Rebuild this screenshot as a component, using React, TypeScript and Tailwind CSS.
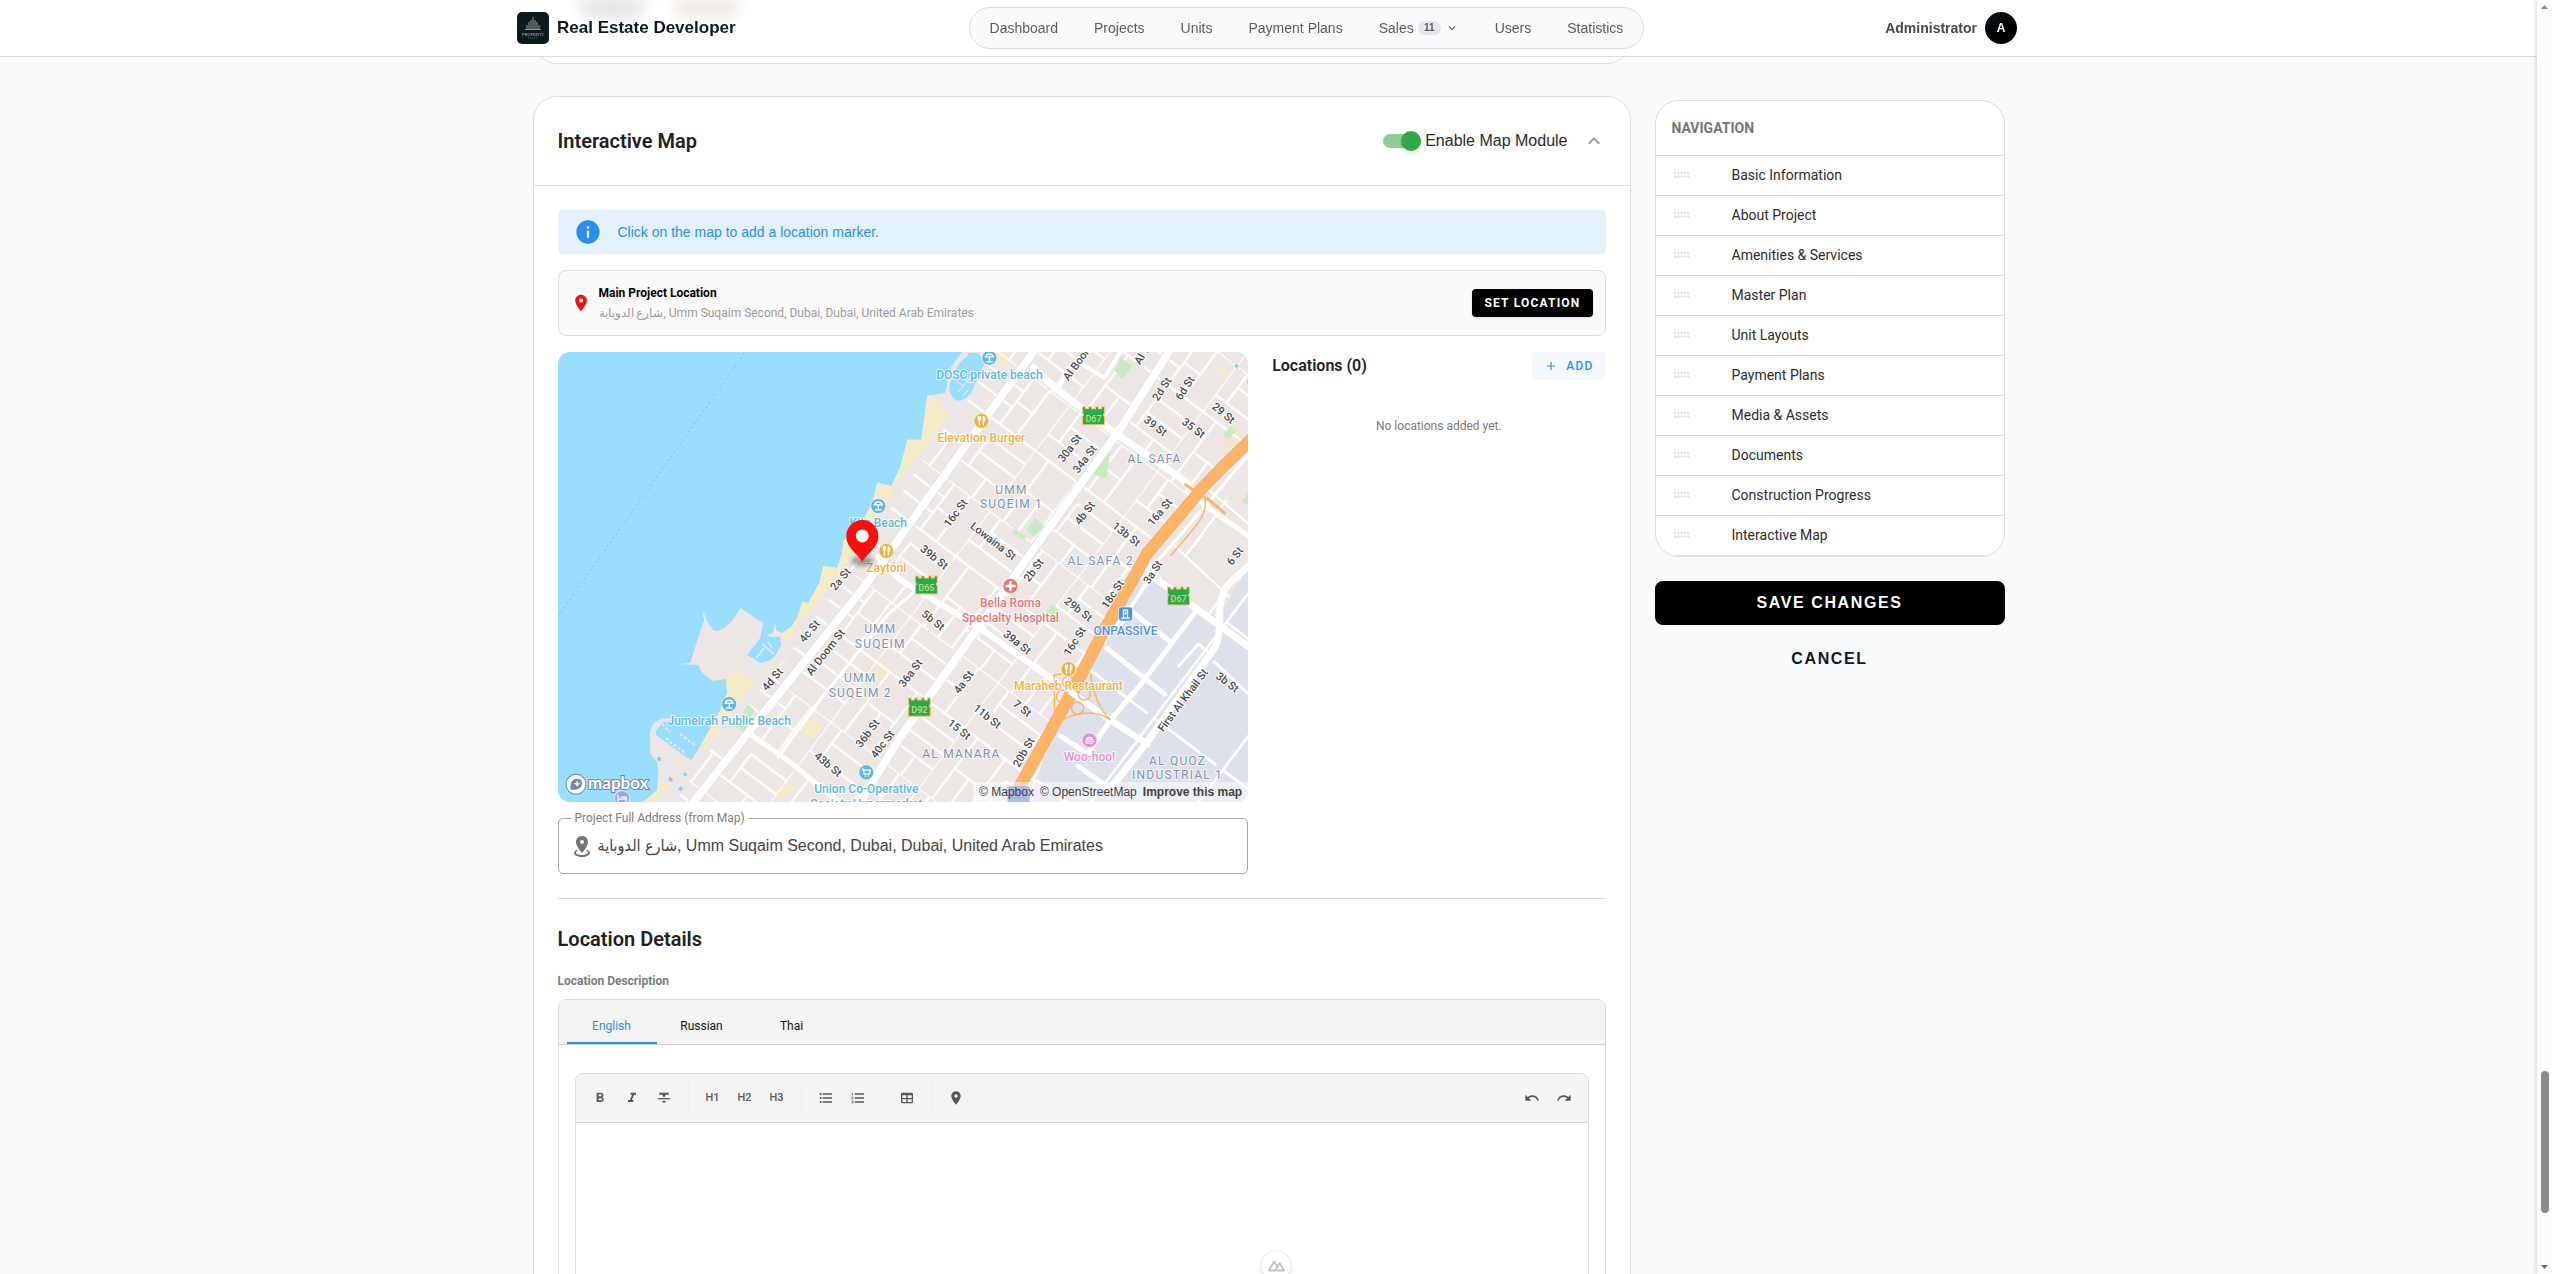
import React, { FunctionComponent, useState } from "react";
import {
  MdAdd,
  MdExpandLess,
  MdExpandMore,
  MdFormatBold,
  MdFormatItalic,
  MdFormatListBulleted,
  MdFormatListNumbered,
  MdFormatStrikethrough,
  MdInfo,
  MdLocationOn,
  MdRedo,
  MdUndo,
} from "react-icons/md";

const ADDRESS = "شارع الدوباية, Umm Suqaim Second, Dubai, Dubai, United Arab Emirates";

const sections = [
  "Basic Information",
  "About Project",
  "Amenities & Services",
  "Master Plan",
  "Unit Layouts",
  "Payment Plans",
  "Media & Assets",
  "Documents",
  "Construction Progress",
  "Interactive Map",
];

const Logo = () => (
  <svg viewBox="0 0 32 32" className="size-8 shrink-0" aria-hidden="true">
    <rect width="32" height="32" rx="5" fill="#0c1a1f" />
    <g stroke="#9a948f" strokeWidth="1">
      <path d="M16 5v12M14 8v9M18 8v9M12 10v7M20 10v7M10 13v4M22 13v4" />
      <path d="M8 17.500h16" />
    </g>
    <text x="16" y="23.500" fontSize="4" fontWeight="700" textAnchor="middle" fill="#8d8f90">
      PROPERTY
    </text>
    <path d="M11 26h10" stroke="#55605f" strokeWidth="1" strokeDasharray="1 1" />
  </svg>
);

const Header = () => (
  <header className="fixed inset-x-0 top-0 z-20 border-b border-[#dcdcdc] bg-white pr-[18px] font-['Liberation_Sans',Arial,sans-serif]">
    <div className="pointer-events-none absolute left-[580px] top-0 h-4 w-16 rounded-b-xl bg-[#dcdcde] blur-[8px]" />
    <div className="pointer-events-none absolute left-[675px] top-0 h-4 w-16 rounded-b-xl bg-[#ebe5e1] blur-[8px]" />
    <div className="relative mx-auto flex h-14 max-w-[1500px] items-center justify-between">
      <a href="#home" className="flex items-center gap-2 text-[17px] font-bold text-[#0c1a1f]">
        <Logo />
        Real Estate Developer
      </a>
      <nav className="flex h-[42px] items-center gap-1 rounded-full border border-[#dadbdc] bg-[#f9fafc] px-1 text-sm text-[#5c5c5e]">
        <a href="#dashboard" className="px-4">Dashboard</a>
        <a href="#projects" className="px-4">Projects</a>
        <a href="#units" className="px-4">Units</a>
        <a href="#plans" className="px-4">Payment Plans</a>
        <button type="button" className="flex items-center gap-1 px-4">
          Sales
          <span className="flex h-[14px] w-[23px] items-center justify-center rounded-full bg-[#e6e6ec] text-[10px] font-bold">
            11
          </span>
          <MdExpandMore className="size-[14px]" />
        </button>
        <a href="#users" className="px-4">Users</a>
        <a href="#statistics" className="px-4">Statistics</a>
      </nav>
      <button type="button" className="flex items-center gap-2 pl-2 text-sm font-bold text-[#48484a]">
        Administrator
        <span className="flex size-8 items-center justify-center rounded-full bg-linear-to-br from-[#0c1a1f] to-black text-xs text-white">
          A
        </span>
      </button>
    </div>
  </header>
);

/* ---------- map ---------- */

type Label = [text: string, x: number, y: number, angle: number];

const streets: Label[] = [
  ["Al Boom St", 523, 5, -53],
  ["Al Wasl", 588, -4, -57],
  ["2d St", 603, 37, -57],
  ["6d St", 626, 36, -57],
  ["39 St", 597, 74, 37],
  ["29 St", 665, 61, 40],
  ["35 St", 635, 76, 37],
  ["30a St", 511, 96, -53],
  ["34a St", 526, 107, -53],
  ["16c St", 397, 161, -53],
  ["Lowaina St", 435, 189, 38],
  ["4b St", 526, 161, -53],
  ["13b St", 568, 182, 38],
  ["16a St", 601, 160, -50],
  ["39b St", 376, 205, 38],
  ["6 St", 676, 204, -53],
  ["2b St", 475, 218, -53],
  ["3a St", 594, 220, -57],
  ["5b St", 375, 268, 38],
  ["39a St", 459, 290, 38],
  ["29b St", 520, 257, 38],
  ["18c St", 554, 242, -57],
  ["16c St", 516, 289, -58],
  ["36a St", 352, 321, -53],
  ["4a St", 405, 330, -53],
  ["7 St", 464, 356, 38],
  ["11b St", 429, 364, 38],
  ["15 St", 401, 377, 38],
  ["20b St", 465, 400, -60],
  ["3b St", 669, 330, 38],
  ["2a St", 282, 227, -50],
  ["4c St", 251, 279, -50],
  ["Al Doom St", 267, 300, -52],
  ["4d St", 214, 327, -50],
  ["36b St", 309, 381, -53],
  ["40c St", 324, 392, -53],
  ["43b St", 270, 412, 40],
  ["First Al Khail St", 624, 348, -53],
];

const districts: Label[] = [
  ["AL SAFA", 596, 107, 0],
  ["UMM", 453, 138, 0],
  ["SUQEIM 1", 453, 152, 0],
  ["AL SAFA 2", 542, 209, 0],
  ["UMM", 322, 277, 0],
  ["SUQEIM", 322, 292, 0],
  ["UMM", 302, 326, 0],
  ["SUQEIM 2", 302, 341, 0],
  ["AL MANARA", 403, 402, 0],
  ["AL QUOZ", 619, 409, 0],
  ["INDUSTRIAL 1", 619, 423, 0],
];

const shields: [string, number, number][] = [
  ["D67", 535, 64],
  ["D65", 368, 233],
  ["D67", 620, 244],
  ["D92", 361, 355],
];

interface PoiProps {
  x: number;
  y: number;
  color: string;
  kind: "beach" | "food" | "shop" | "burger" | "health" | "office" | "hotel";
  lines: string[];
}

const poiGlyphs: Record<PoiProps["kind"], React.ReactNode> = {
  beach: <path d="M-4-1Q-3-4 0-4Q3-4 4-1ZM0-1V4M-3 4H3" />,
  food: <path d="M-3-4V-1H-1V-4M-2-4V4M2 4V-4Q4-3 3 0H2" />,
  shop: <path d="M-4-3H-3L-2 2H3L4-2H-3M-1 4H-1M2 4H2" />,
  burger: <path d="M-3-1Q0-5 3-1ZM-4 1H4M-3 3H3" />,
  health: <path d="M0-4V4M-4 0H4" strokeWidth="2.500" />,
  office: <path d="M-2 4V-4H2V4ZM-4 4H4M0-2V0" />,
  hotel: <path d="M-4-3V3M-4 1H4V3M-1-1H4V1" />,
};

const Poi = ({ x, y, color, kind, lines }: PoiProps) => (
  <g transform={`translate(${x} ${y})`}>
    {kind === "office" ? (
      <rect x="-7" y="-7" width="14" height="14" rx="3" fill={color} stroke="#fff" strokeOpacity=".6" />
    ) : (
      <circle r="7.500" fill={color} stroke="#fff" strokeOpacity=".6" />
    )}
    <g fill="none" stroke="#fff" strokeWidth="1.300" strokeLinecap="round">
      {poiGlyphs[kind]}
    </g>
    {lines.map((line, i) => (
      <text
        key={line}
        y={21 + i * 15}
        textAnchor="middle"
        fontSize="12"
        fontWeight="500"
        fill={color}
        stroke="#fff"
        strokeOpacity=".75"
        strokeWidth="2"
        paintOrder="stroke"
      >
        {line}
      </text>
    ))}
  </g>
);

const LAND =
  "M404 0L392 16L387 41L369 44L366 66L363 88L349 88L342 115L333 134L319 131L314 151L305 168L290 182L285 190L284 200L279 216L265 214L261 231L250 251L244 250L239 266L233 275L224 281L218 279L217 270L215 281L208 283L213 285L222 285L223 293L217 304L210 309L202 311L189 303L202 286L205 271L182 256L174 269L166 276L160 279L155 278L150 271L144 257L146 268L141 283L132 311L121 312L140 313L144 321L155 329L168 327L169 341L162 358L141 396L133 408L98 383L98 378L105 370L119 366L104 366L95 372L92 379L92 401L99 410L100 420L99 438L85 450H690V0Z";

const HIGHWAY = "M694 86L664 115L642 138L618 167L589 201L575 226L542 285L525 318L502 361L458 440";

const ProjectMap = () => (
  <svg
    viewBox="0 0 690 450"
    preserveAspectRatio="xMidYMid slice"
    className="block h-[450px] w-full font-[Roboto,sans-serif]"
    role="img"
    aria-label="Project map"
  >
    <defs>
      <pattern id="blocks" width="132" height="110" patternUnits="userSpaceOnUse" patternTransform="rotate(-53)">
        <path
          d="M0 0H132M0 0V110M0 52H76M76 0V110M0 17H76M0 35H38M38 17V52M97 0V66M116 14V66M76 66H132M97 14H132M24 52V110M42 66V110M59 66V110M24 66H59M0 88H24M76 86H132M104 66V86"
          fill="none"
          stroke="#fff"
          strokeWidth="2"
        />
      </pattern>
      <pattern id="lots" width="120" height="86" patternUnits="userSpaceOnUse" patternTransform="rotate(-53)">
        <path d="M0 8H120M66 8V86" fill="none" stroke="#fff" strokeWidth="2.500" />
      </pattern>
      <clipPath id="land">
        <path d={LAND} />
      </clipPath>
    </defs>
    <rect width="690" height="450" fill="#99ddff" />
    <path d="M186 2L0 264" stroke="#6fb4d8" strokeWidth="1" strokeDasharray="1 4" />
    <path d={LAND} fill="#ece7e5" />

    <g clipPath="url(#land)">
      <path
        d="M369 40L391 62L377 82L365 98L350 114L340 128L328 152L312 178L296 200L282 220L256 252L240 272L229 290L216 278L262 205L290 150L320 120L348 80Z"
        fill="#f5ebc7"
      />
      <path d="M180 318L196 330L176 358L146 398L136 396L162 350L167 326Z" fill="#f5ebc7" />
      <path d="M99 430L114 431L94 452H82ZM247 370L257 366L266 376L256 386L246 382ZM214 438L235 431L236 438L222 448Z" fill="#f5ebc7" />
      <path d="M436 0H450L448 12L440 18Z" fill="#f5ebc7" />
      <path d="M312 300L336 317L324 334L305 324Z" fill="#f0e6d3" />
      <path d="M668 73L680 71L686 80L672 100L662 92Z" fill="#f0e6d3" />
      <path d="M658 13L673 20L669 25L658 20Z" fill="#f5ebc7" />

      {/* street blocks, none on the peninsula and the beaches */}
      <path
        d="M408 0L396 60L352 128L300 205L236 295L180 365L140 412L118 450H690V0Z"
        fill="url(#blocks)"
      />
      <path d="M590 225L640 262L662 262L690 214V450H470L502 361L542 285L575 230Z" fill="#dfe1ea" />
      <path d="M590 225L640 262L662 262L690 214V450H470L502 361L542 285L575 230Z" fill="url(#lots)" />
      <path d="M646 128L690 90V214L664 240L640 258L600 222L590 205Z" fill="#ece7e5" />
      <path d="M614 192L668 242M648 136L690 172M626 205L660 160M668 148L634 196" stroke="#fff" strokeWidth="2" />

      <path
        d="M562 6L574 14L564 28L556 19ZM552 98L548 126L534 122L542 106ZM476 166L486 174L476 185L468 178ZM456 177L468 184L466 188L454 181ZM665 82L672 75L678 80L668 87ZM690 140L683 150L690 154ZM190 352L196 358L186 380L176 374ZM494 252L500 258L490 270L484 266Z"
        fill="#c8ecc2"
      />

      <g fill="none" stroke="#d9d9e2" strokeLinejoin="round" strokeLinecap="round">
        <path d="M478-4L420 76L309 231L192 378L133 453" strokeWidth="9" />
        <path d="M613-4L559 81L461 217L420 275L342 385L300 453" strokeWidth="9" />
      </g>
      <g fill="none" stroke="#fff" strokeLinejoin="round" strokeLinecap="round">
        <path d="M478-4L420 76L309 231L192 378L133 453" strokeWidth="8" />
        <path d="M613-4L559 81L461 217L420 275L342 385L300 453" strokeWidth="8" />
        <path d="M475 16L499 38L559 83L625 128Q638 140 628 152L596 194Q584 208 592 217" strokeWidth="7" />
        <path d="M320 205L342 228L420 275L485 321L552 368L589 392" strokeWidth="6" />
        <path d="M189 380L232 410L283 453" strokeWidth="5" />
        <path d="M220 405L262 348L330 262L372 226" strokeWidth="3" />
        <path d="M499 38L512 14M526 14L546 26L562 0" strokeWidth="4" />
        <path d="M586 218L638 257L692 296" strokeWidth="7" />
        <path d="M692 100L652 148L600 208L560 278" strokeWidth="3" />
        <path d="M636 146L664 166L690 184" strokeWidth="5" />
        <path d="M690 214L672 230Q662 240 661 258Q662 285 656 296L642 315L587 392L552 436" strokeWidth="7" />
        <path d="M552 368L584 330L638 258M552 368L530 400M548 296L606 342M571 258L611 289M520 414L556 440M502 384L530 402" strokeWidth="5" />
        <path d="M620 314L640 292L652 302M656 310L690 342" strokeWidth="3" />
      </g>

      <path d={HIGHWAY} fill="none" stroke="#e9a45b" strokeWidth="12" />
      <path d={HIGHWAY} fill="none" stroke="#ffb366" strokeWidth="11" />
      <path d="M552 368L485 321" stroke="#fff" strokeWidth="6" />
      <g fill="none" stroke="#ffb366" strokeWidth="1.500">
        <path d="M626 132L645 145L667 162M628 152Q626 162 622 166M612 204L634 178Q650 160 646 144" />
        <path d="M494 324L516 318L524 314M532 322Q536 352 552 368Q530 352 496 372V322" />
        <circle cx="504" cy="344" r="6" />
        <circle cx="526" cy="342" r="6" />
        <circle cx="519" cy="356" r="6" />
        <circle cx="510" cy="330" r="6" />
      </g>
      <path d="M626 132L640 142M648 146L667 162" stroke="#ffb366" strokeWidth="3" />
    </g>

    {/* marina basins */}
    <path
      d="M408 4Q396 12 390 34Q390 48 400 50Q412 48 416 36L424 18L428 10L420 0H410Z"
      fill="#99ddff"
      stroke="#ece7e5"
      strokeWidth="2"
    />
    <path d="M400 40L412 26M404 44L410 38M398 30L406 34M402 24L412 32" stroke="#ece7e5" strokeWidth="1" />
    <path d="M198 306L206 296M204 292L216 302M210 290L214 296" stroke="#ece7e5" strokeWidth="1.500" />
    <path d="M104 372L112 380M108 386L116 394M116 392L128 402M122 382L138 394" stroke="#ece7e5" strokeWidth="2" strokeDasharray="3 2" />
    <path d="M112 424l3 3-2 3-3-3ZM122 434l3 2-2 3-3-2ZM100 404l3 2-1 3-3-1ZM126 420l3 2-1 2-3-1ZM677 12l3 2-2 3-2-3ZM688 28l3 3-2 2Z" fill="#84cdf2" />

    <g fontSize="11" fontWeight="500" textAnchor="middle" fill="#4a4a4e" stroke="#fff" strokeWidth="2" paintOrder="stroke">
      {streets.map(([text, x, y, angle]) => (
        <text key={text + x} transform={`translate(${x} ${y}) rotate(${angle})`} y="4">
          {text}
        </text>
      ))}
    </g>
    <g
      fontSize="12"
      textAnchor="middle"
      fill="#7c93b8"
      stroke="#fff"
      strokeOpacity=".7"
      strokeWidth="2"
      paintOrder="stroke"
      className="tracking-widest"
    >
      {districts.map(([text, x, y]) => (
        <text key={text + x} x={x} y={y + 4}>
          {text}
        </text>
      ))}
    </g>
    {shields.map(([text, x, y]) => (
      <g key={text + x} transform={`translate(${x} ${y})`}>
        <path
          d="M-11-9H-8V-7H-5V-9H-2V-7H2V-9H5V-7H8V-9H11V-3L10-1L11 1V9H-11V1L-10-1L-11-3Z"
          fill="#2fa84a"
          stroke="#f3c878"
          strokeWidth="1"
        />
        <text y="6" fontSize="9" fontWeight="500" textAnchor="middle" fill="#b9e27c">
          {text}
        </text>
      </g>
    ))}
    <rect x="449" y="434" width="22" height="16" rx="2" fill="#5f74dc" />
    <text x="460" y="446" fontSize="9" fontWeight="500" textAnchor="middle" fill="#3c50b4">
      E11
    </text>

    <Poi x={431} y={6} color="#62b5e0" kind="beach" lines={["DOSC private beach"]} />
    <Poi x={423} y={69} color="#edb244" kind="food" lines={["Elevation Burger"]} />
    <Poi x={320} y={154} color="#62b5e0" kind="beach" lines={["Kite Beach"]} />
    <Poi x={328} y={199} color="#edb244" kind="food" lines={["Zaytóni"]} />
    <Poi x={452} y={234} color="#ea7474" kind="health" lines={["Bella Roma", "Specialty Hospital"]} />
    <Poi x={567} y={262} color="#4f93dc" kind="office" lines={["ONPASSIVE"]} />
    <Poi x={510} y={317} color="#edb244" kind="food" lines={["Maraheb Restaurant"]} />
    <Poi x={531} y={388} color="#ea8fd0" kind="burger" lines={["Woo-hoo!"]} />
    <Poi x={171} y={352} color="#62b5e0" kind="beach" lines={["Jumeirah Public Beach"]} />
    <Poi x={308} y={420} color="#62b5e0" kind="shop" lines={["Union Co-Operative", "Society Hypermarket"]} />
    <Poi x={64} y={446} color="#9aa6e0" kind="hotel" lines={[]} />

    {/* marker */}
    <ellipse cx="304" cy="209" rx="11" ry="5" fill="#000" opacity=".35" className="blur-[2px]" />
    <path
      d="M304 210C300 202 288 196 288 184A16 16 0 0 1 320 184C320 196 308 202 304 210Z"
      fill="#f5100d"
    />
    <circle cx="304" cy="184" r="6.500" fill="#fff" />

    {/* mapbox wordmark */}
    <circle cx="18" cy="432" r="8.500" fill="none" stroke="#6f87ad" strokeWidth="4" />
    <circle cx="18" cy="432" r="8.500" fill="#fff" stroke="#fff" strokeWidth="2" />
    <path d="M12.500 437.500C12 431 14 426.500 19 426.500A5 5 0 0 1 24 431C24 436 19 438 12.500 437.500Z" fill="#6f87ad" />
    <path d="M19 428L20 430.500L22.500 431.500L20 432.500L19 435L18 432.500L15.500 431.500L18 430.500Z" fill="#fff" />
    <text
      x="30"
      y="437"
      fontSize="17"
      fontWeight="700"
      fill="#fff"
      stroke="#6f87ad"
      strokeWidth="2"
      paintOrder="stroke"
      className="font-[Lato,sans-serif]"
    >
      mapbox
    </text>
  </svg>
);

/* ---------- editor ---------- */

const ToolButton = ({ label, children }: { label: string; children: React.ReactNode }) => (
  <button
    type="button"
    aria-label={label}
    className="flex size-8 items-center justify-center text-[11px] font-medium text-[#58585a]"
  >
    {children}
  </button>
);

const Separator = () => <span className="mx-2 h-8 w-px bg-[#eeeeee]" />;

const TableIcon = () => (
  <svg viewBox="0 0 24 24" className="size-4" fill="currentColor">
    <path d="M5 4H19A2 2 0 0 1 21 6V18A2 2 0 0 1 19 20H5A2 2 0 0 1 3 18V6A2 2 0 0 1 5 4M5 8V12H11V8H5M13 8V12H19V8H13M5 14V18H11V14H5M13 14V18H19V14H13Z" />
  </svg>
);

const Editor = () => (
  <div className="rounded-lg border border-[#dcdcdc]">
    <div className="flex h-[49px] items-center rounded-t-lg border-b border-[#d0d0d0] bg-[#f4f4f4] px-2">
      <ToolButton label="Bold"><MdFormatBold className="size-4" /></ToolButton>
      <ToolButton label="Italic"><MdFormatItalic className="size-4" /></ToolButton>
      <ToolButton label="Strikethrough"><MdFormatStrikethrough className="size-4" /></ToolButton>
      <Separator />
      <ToolButton label="Heading 1">H1</ToolButton>
      <ToolButton label="Heading 2">H2</ToolButton>
      <ToolButton label="Heading 3">H3</ToolButton>
      <Separator />
      <ToolButton label="Bullet list"><MdFormatListBulleted className="size-4" /></ToolButton>
      <ToolButton label="Numbered list"><MdFormatListNumbered className="size-4" /></ToolButton>
      <Separator />
      <ToolButton label="Table"><TableIcon /></ToolButton>
      <Separator />
      <ToolButton label="Location"><MdLocationOn className="size-4" /></ToolButton>
      <span className="grow" />
      <ToolButton label="Undo"><MdUndo className="size-4" /></ToolButton>
      <ToolButton label="Redo"><MdRedo className="size-4" /></ToolButton>
    </div>
    <textarea aria-label="Location description" className="block h-64 w-full resize-none p-4 outline-none" />
  </div>
);

const AddressField = () => (
  <fieldset className="mt-2 h-16 rounded-[5px] border border-[#a8a8a8] px-3">
    <legend className="px-1 text-xs leading-4 text-[#7d7d7d]">
      <label htmlFor="address">Project Full Address (from Map)</label>
    </legend>
    <div className="flex h-10 items-center gap-1">
      <svg viewBox="0 0 24 24" className="-ml-px size-6 shrink-0" fill="#757575">
        <path d="M12,2C15.31,2 18,4.66 18,7.95C18,12.41 12,19 12,19C12,19 6,12.41 6,7.95C6,4.66 8.69,2 12,2M12,6A2,2 0 0,0 10,8A2,2 0 0,0 12,10A2,2 0 0,0 14,8A2,2 0 0,0 12,6M20,19C20,21.21 16.42,23 12,23C7.58,23 4,21.21 4,19C4,17.71 5.22,16.56 7.11,15.83L7.75,16.74C6.67,17.19 6,17.81 6,18.5C6,19.88 8.69,21 12,21C15.31,21 18,19.88 18,18.5C18,17.81 17.33,17.19 16.25,16.74L16.89,15.83C18.78,16.56 20,17.71 20,19Z" />
      </svg>
      <input
        id="address"
        readOnly
        value={ADDRESS}
        className="min-w-0 grow bg-transparent font-['Liberation_Sans','DejaVu_Sans_Condensed',sans-serif] text-base text-[#454545] outline-none"
      />
    </div>
  </fieldset>
);

const MapCard = () => {
  const [enabled, setEnabled] = useState(true);
  const [language, setLanguage] = useState("English");

  return (
    <section className="rounded-3xl border border-[#dedede] bg-white">
      <div className="flex h-[89px] items-center border-b border-[#dedede] px-6">
        <h2 className="grow text-xl font-semibold text-[#212121]">Interactive Map</h2>
        <label className="flex items-center gap-1 font-['Liberation_Sans',Arial,sans-serif] text-base text-[#2a2a2a]">
          <input
            type="checkbox"
            checked={enabled}
            onChange={() => setEnabled(!enabled)}
            className="peer sr-only"
          />
          <span className="flex h-[14px] w-[38px] items-center rounded-full bg-[#93cb94] peer-checked:justify-end">
            <span className="size-5 rounded-full bg-[#32a849] shadow-md" />
          </span>
          Enable Map Module
        </label>
        <button type="button" aria-label="Collapse" className="ml-[14px] text-[#999999]">
          <MdExpandLess className="size-6" />
        </button>
      </div>

      <div className="px-6 py-6">
        <div className="flex h-11 items-center gap-4 rounded bg-[#e3f1fd] px-4 font-['Liberation_Sans',Arial,sans-serif] text-sm text-[#2a8fe6]">
          <MdInfo className="size-7" />
          Click on the map to add a location marker.
        </div>

        <div className="mt-4 flex h-[66px] items-center gap-2 rounded-lg border border-[#dcdcdc] bg-[#fafafa] px-3">
          <MdLocationOn className="size-5 text-[#f5100d]" />
          <div className="grow text-xs leading-5">
            <p className="font-bold text-black">Main Project Location</p>
            <p className="text-[#9c9c9c]">{ADDRESS}</p>
          </div>
          <button
            type="button"
            className="h-7 rounded bg-black px-3 text-xs font-bold tracking-widest text-white uppercase shadow"
          >
            Set Location
          </button>
        </div>

        <div className="mt-4 grid grid-cols-3 gap-x-6">
          <div className="col-span-2">
            <div className="relative overflow-hidden rounded-xl">
              <ProjectMap />
              <p className="absolute right-0 bottom-0 flex h-5 items-center gap-[6px] bg-white/50 px-[6px] font-['Liberation_Sans',Arial,sans-serif] text-xs text-[#404040]">
                <a href="#mapbox">© Mapbox</a>
                <a href="#osm">© OpenStreetMap</a>
                <a href="#improve" className="font-bold">Improve this map</a>
              </p>
            </div>
            <AddressField />
          </div>
          <div>
            <div className="flex h-7 items-center justify-between">
              <h3 className="text-base font-semibold text-[#212121]">Locations (0)</h3>
              <button
                type="button"
                className="flex h-7 items-center gap-2 rounded bg-[#f5f9fd] px-3 text-xs font-medium tracking-widest text-[#2a8fe6] uppercase"
              >
                <MdAdd className="size-[14px]" />
                Add
              </button>
            </div>
            <p className="mt-9 text-center text-xs leading-5 text-[#7b7b7b]">No locations added yet.</p>
          </div>
        </div>

        <hr className="mt-6 border-[#dedede]" />

        <h2 className="mt-6 text-xl leading-8 font-semibold text-[#212121]">Location Details</h2>
        <h3 className="mt-4 text-xs leading-5 font-bold text-[#7b7b7b]">Location Description</h3>
        <div className="mt-2 rounded-t-lg border border-[#dcdcdc]">
          <div className="flex h-[45px] rounded-t-lg border-b border-[#d0d0d0] bg-[#f4f4f4] pl-2 text-xs" role="tablist">
            {["English", "Russian", "Thai"].map((name) => (
              <button
                key={name}
                type="button"
                role="tab"
                aria-selected={language === name}
                onClick={() => setLanguage(name)}
                className={
                  language === name
                    ? "w-[90px] border-b-2 border-[#2a8fe6] pt-[10px] text-[#2a8fe6]"
                    : "w-[90px] border-b-2 border-transparent pt-[10px] text-[#111111]"
                }
              >
                {name}
              </button>
            ))}
          </div>
          <div className="px-4 pt-7 pb-4">
            <Editor />
          </div>
        </div>
      </div>
    </section>
  );
};

const DragHandle = () => (
  <svg viewBox="0 0 16 6" className="h-[6px] w-4" fill="none" stroke="#dcdcdc" strokeWidth="2" strokeDasharray="2 1.300">
    <path d="M0 1H16M0 4.500H16" />
  </svg>
);

const Sidebar = () => (
  <aside className="w-[350px] shrink-0 pt-1">
    <nav className="overflow-hidden rounded-3xl border border-[#dedede] bg-white">
      <h2 className="flex h-[54px] items-center px-4 text-sm font-bold text-[#757575] uppercase">Navigation</h2>
      <ul>
        {sections.map((name, i) => (
          <li
            key={name}
            className={
              i === 0
                ? "border-y border-[#dedede]"
                : "border-b border-[#dedede]"
            }
          >
            <a href="#section" className="flex h-[39px] items-center gap-[42px] px-[18px] pb-px text-sm text-[#2c2c2c]">
              <DragHandle />
              {name}
            </a>
          </li>
        ))}
      </ul>
    </nav>
    <div className="mt-6 flex flex-col gap-3 font-['Liberation_Sans',Arial,sans-serif] text-base font-bold">
      <button type="button" className="h-11 rounded-lg bg-black tracking-widest text-white uppercase">
        Save Changes
      </button>
      <button type="button" className="h-11 rounded-lg tracking-widest text-[#0c1a1f] uppercase">
        Cancel
      </button>
    </div>
  </aside>
);

const Scrollbar = () => (
  <div className="fixed inset-y-0 right-0 z-30 flex w-[15px] flex-col items-center bg-[#fcfcfc] shadow-[-1px_0_4px_rgba(0,0,0,0.15)]">
    <svg viewBox="0 0 15 15" className="w-full" fill="#8a8a8a"><path d="M4 9L7.500 5L11 9Z" /></svg>
    <span className="grow-[1056]" />
    <span className="w-2 grow-[142] rounded-full bg-[#8b8b8b]" />
    <span className="grow-[46]" />
    <svg viewBox="0 0 15 15" className="w-full" fill="#6a6a6a"><path d="M4 6L7.500 10L11 6Z" /></svg>
  </div>
);

const App: FunctionComponent = () => {
  return (
    <div className="h-screen overflow-hidden bg-[#f9fafc] font-[Roboto,'Noto_Sans',sans-serif]">
      <Header />
      <div className="pr-[15px]">
        <main className="mx-auto flex max-w-[1472px] items-start gap-6">
          <div className="min-w-0 grow">
            <div className="mb-8 h-16 rounded-b-3xl border border-[#dedede] bg-white" />
            <MapCard />
          </div>
          <div className="mt-24">
            <Sidebar />
          </div>
        </main>
      </div>
      <Scrollbar />
      <button
        type="button"
        aria-label="Devtools"
        className="fixed -bottom-[7px] left-1/2 z-30 flex size-[31px] -translate-x-1/2 items-center justify-center rounded-full border border-[#ededed] bg-white shadow-md"
      >
        <svg viewBox="0 0 24 16" className="w-[18px]" fill="none" stroke="#c2c2c6" strokeWidth="2.500" strokeLinejoin="round" strokeLinecap="round">
          <path d="M13 14H22L16 4L10.500 14H2L9 2L12.500 8" />
        </svg>
      </button>
    </div>
  );
};

export default App;
